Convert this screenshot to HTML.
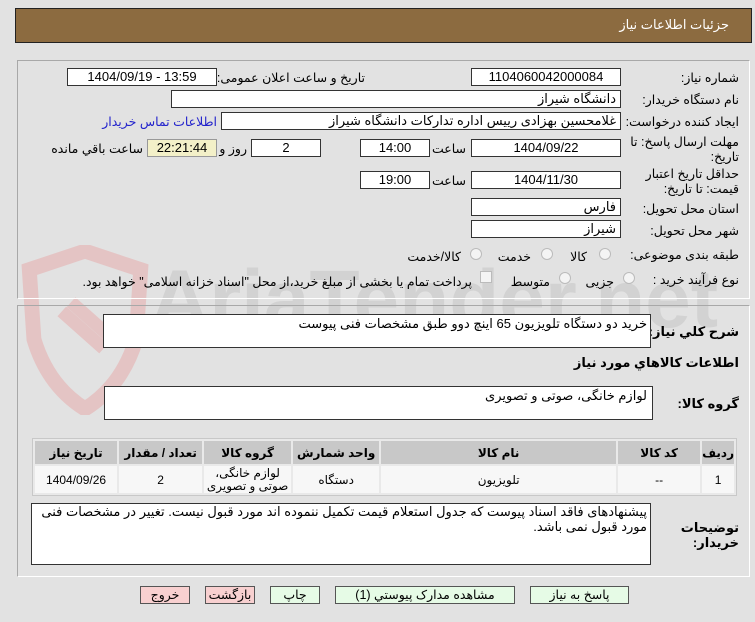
<!DOCTYPE html>
<html><head><meta charset="utf-8"><style>
*{box-sizing:border-box;margin:0;padding:0}
body{width:755px;height:622px;background:#e2e2e2;font-family:"Liberation Sans","DejaVu Sans",sans-serif;font-size:12px;color:#000;position:relative;overflow:hidden}
.a{position:absolute}
.box{position:absolute;background:#fff;border:1px solid #333;height:18px;text-align:center;line-height:16px;font-size:13px}
.l{position:absolute;direction:rtl;white-space:nowrap;font-size:12.5px}
.b{font-weight:bold}
.panel{position:absolute;border:1px solid #a8a8a8;border-right-color:#fff;border-bottom-color:#fff}
.btn{position:absolute;top:586px;height:18px;border:1px solid #555;text-align:center;line-height:16px;font-size:12.5px;background:#e6fbe6}
.red{background:#f8d0d0}
.radio{position:absolute;width:12px;height:12px;border-radius:50%;border:1px solid #bbb;background:#f4f4f4}
table{border-collapse:separate;border-spacing:2px;position:absolute;left:32px;top:438px;width:705px;background:#e9e9e9;border:1px solid #c8c8c8;direction:rtl}
td,th{text-align:center;font-size:12px}
th{background:#c8c8c8;height:23px;font-weight:bold}
td{background:#f7f7f7;height:27px}
</style></head><body>
<div class="a" style="left:15px;top:8px;width:737px;height:35px;background:#8c6b40;border:1px solid #222"></div>
<div class="l" style="right:26px;top:17px;color:#fff;font-size:13px">جزئیات اطلاعات نیاز</div>

<svg class="a" style="left:20px;top:245px;opacity:.45" width="130" height="170" viewBox="0 0 140 180"><path d="M70 5 L130 25 L125 100 Q110 150 70 175 Q30 150 15 100 L10 25 Z" fill="none" stroke="#e8a0a0" stroke-width="16"/><path d="M45 70 L90 110 M55 60 L100 100" stroke="#e8a0a0" stroke-width="14"/></svg>
<div class="a" style="left:150px;top:245px;width:600px;height:110px;overflow:hidden"><div style="font-size:82px;font-weight:bold;color:#c8c8c8;opacity:.6;white-space:nowrap;line-height:110px">AriaTender.net</div></div>

<div class="panel" style="left:17px;top:60px;width:733px;height:239px"></div>
<div class="panel" style="left:17px;top:305px;width:733px;height:272px"></div>

<div class="l" style="right:16px;top:70px">شماره نیاز:</div>
<div class="box" style="left:471px;top:68px;width:150px">1104060042000084</div>
<div class="l" style="right:390px;top:70px">تاریخ و ساعت اعلان عمومی:</div>
<div class="box" style="left:67px;top:68px;width:150px">1404/09/19 - 13:59</div>

<div class="l" style="right:16px;top:92px">نام دستگاه خریدار:</div>
<div class="box" style="left:171px;top:90px;width:450px;text-align:right;padding-right:4px">دانشگاه شیراز</div>

<div class="l" style="right:16px;top:114px">ایجاد کننده درخواست:</div>
<div class="box" style="left:221px;top:112px;width:400px;text-align:right;padding-right:4px">غلامحسین بهزادی رییس اداره تدارکات دانشگاه شیراز</div>
<div class="l" style="right:538px;top:114px;color:#2222cc">اطلاعات تماس خریدار</div>

<div class="l" style="right:16px;top:135px;line-height:15px;text-align:right">مهلت ارسال پاسخ: تا<br>تاریخ:</div>
<div class="box" style="left:471px;top:139px;width:150px">1404/09/22</div>
<div class="l" style="right:289px;top:141px">ساعت</div>
<div class="box" style="left:360px;top:139px;width:70px">14:00</div>
<div class="l" style="right:508px;top:141px">روز و</div>
<div class="box" style="left:251px;top:139px;width:70px">2</div>
<div class="box" style="left:147px;top:139px;width:70px;background:#f3f0c8;border-color:#999">22:21:44</div>
<div class="l" style="right:612px;top:141px">ساعت باقي مانده</div>

<div class="l" style="right:16px;top:167px;line-height:15px;text-align:right">حداقل تاریخ اعتبار<br>قیمت: تا تاریخ:</div>
<div class="box" style="left:471px;top:171px;width:150px">1404/11/30</div>
<div class="l" style="right:289px;top:173px">ساعت</div>
<div class="box" style="left:360px;top:171px;width:70px">19:00</div>

<div class="l" style="right:16px;top:201px">استان محل تحویل:</div>
<div class="box" style="left:471px;top:198px;width:150px;text-align:right;padding-right:4px">فارس</div>
<div class="l" style="right:16px;top:223px">شهر محل تحویل:</div>
<div class="box" style="left:471px;top:220px;width:150px;text-align:right;padding-right:4px">شیراز</div>

<div class="l" style="right:16px;top:247px">طبقه بندی موضوعی:</div>
<div class="radio" style="left:599px;top:248px"></div><div class="l" style="right:168px;top:249px">کالا</div>
<div class="radio" style="left:541px;top:248px"></div><div class="l" style="right:224px;top:249px">خدمت</div>
<div class="radio" style="left:470px;top:248px"></div><div class="l" style="right:294px;top:249px">کالا/خدمت</div>

<div class="l" style="right:16px;top:272px">نوع فرآیند خرید :</div>
<div class="radio" style="left:623px;top:272px"></div><div class="l" style="right:141px;top:274px">جزیی</div>
<div class="radio" style="left:559px;top:272px"></div><div class="l" style="right:205px;top:274px">متوسط</div>
<div class="a" style="left:480px;top:271px;width:12px;height:12px;border:1px solid #bbb;background:#f4f4f4"></div>
<div class="l" style="right:283px;top:274px">پرداخت تمام یا بخشی از مبلغ خرید،از محل "اسناد خزانه اسلامی" خواهد بود.</div>

<div class="l b" style="right:16px;top:324px;font-size:13px">شرح کلي نياز:</div>
<div class="box" style="left:103px;top:314px;width:548px;height:34px;text-align:right;padding-right:3px;line-height:18px">خرید دو دستگاه تلویزیون 65 اینچ دوو طبق مشخصات فنی پیوست</div>
<div class="l b" style="right:16px;top:355px;font-size:13px">اطلاعات کالاهاي مورد نياز</div>
<div class="l b" style="right:16px;top:396px;font-size:13px">گروه کالا:</div>
<div class="box" style="left:104px;top:386px;width:549px;height:34px;text-align:right;padding-right:5px;line-height:18px">لوازم خانگی، صوتی و تصویری</div>

<table>
<tr><th style="width:28px">رديف</th><th style="width:82px">کد کالا</th><th style="width:235px">نام کالا</th><th style="width:86px">واحد شمارش</th><th style="width:87px">گروه کالا</th><th style="width:83px">تعداد / مقدار</th><th>تاريخ نياز</th></tr>
<tr><td>1</td><td>--</td><td>تلویزیون</td><td>دستگاه</td><td style="line-height:13px">لوازم خانگی،<br>صوتی و تصویری</td><td>2</td><td>1404/09/26</td></tr>
</table>

<div class="l b" style="right:16px;top:520px;font-size:13px;line-height:15px;text-align:right">توضيحات<br>خريدار:</div>
<div class="box" style="left:31px;top:503px;width:620px;height:62px;text-align:right;padding-right:3px;line-height:15px;white-space:normal;direction:rtl">پیشنهادهای فاقد اسناد پیوست که جدول استعلام قیمت تکمیل ننموده اند مورد قبول نیست. تغییر در مشخصات فنی مورد قبول نمی باشد.</div>

<div class="btn red" style="left:140px;width:50px">خروج</div>
<div class="btn red" style="left:205px;width:50px">بازگشت</div>
<div class="btn" style="left:270px;width:50px">چاپ</div>
<div class="btn" style="left:335px;width:180px">مشاهده مدارک پیوستي (1)</div>
<div class="btn" style="left:530px;width:99px">پاسخ به نياز</div>
</body></html>
